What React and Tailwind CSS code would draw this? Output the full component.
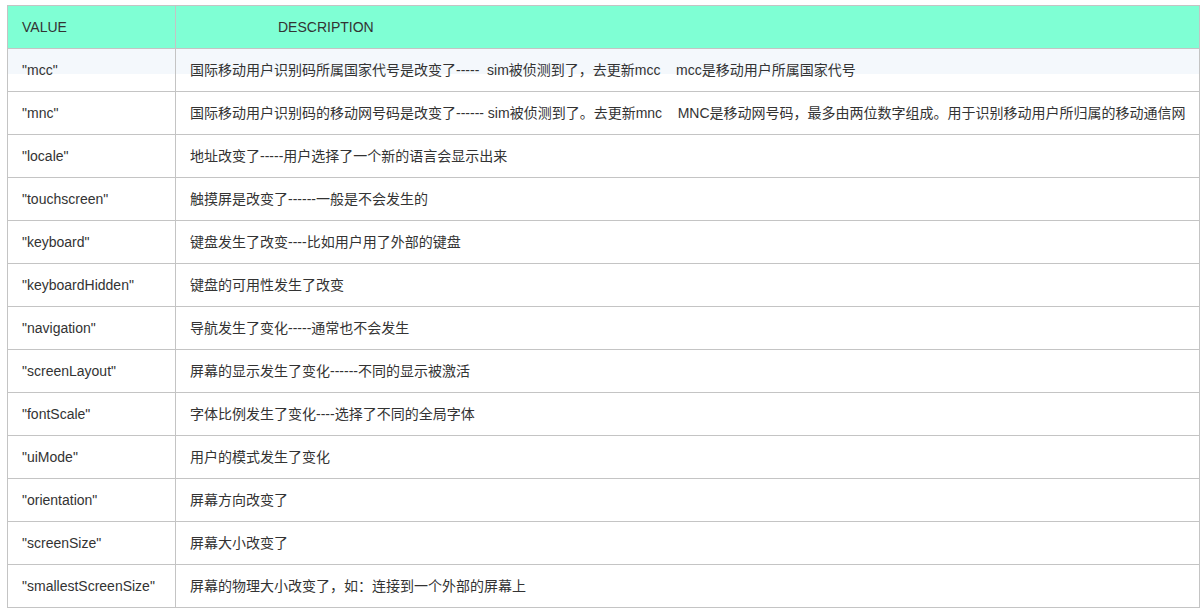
import React from "react"

const rows = [
  ["\"mcc\"", "国际移动用户识别码所属国家代号是改变了-----\u00a0\u00a0sim被侦测到了，去更新mcc\u00a0\u00a0\u00a0\u00a0mcc是移动用户所属国家代号"],
  ["\"mnc\"", "国际移动用户识别码的移动网号码是改变了------ sim被侦测到了。去更新mnc\u00a0\u00a0\u00a0\u00a0MNC是移动网号码，最多由两位数字组成。用于识别移动用户所归属的移动通信网"],
  ["\"locale\"", "地址改变了-----用户选择了一个新的语言会显示出来"],
  ["\"touchscreen\"", "触摸屏是改变了------一般是不会发生的"],
  ["\"keyboard\"", "键盘发生了改变----比如用户用了外部的键盘"],
  ["\"keyboardHidden\"", "键盘的可用性发生了改变"],
  ["\"navigation\"", "导航发生了变化-----通常也不会发生"],
  ["\"screenLayout\"", "屏幕的显示发生了变化------不同的显示被激活"],
  ["\"fontScale\"", "字体比例发生了变化----选择了不同的全局字体"],
  ["\"uiMode\"", "用户的模式发生了变化"],
  ["\"orientation\"", "屏幕方向改变了"],
  ["\"screenSize\"", "屏幕大小改变了"],
  ["\"smallestScreenSize\"", "屏幕的物理大小改变了，如：连接到一个外部的屏幕上"],
]

export default function App() {
  return (
    <div className="min-h-[611px] bg-white pt-[5px] pl-[7px] font-['Liberation_Sans','Noto_Sans_CJK_SC',sans-serif] text-[14px] text-[#333]">
      <table className="w-[1193px] table-fixed border-collapse">
        <thead>
          <tr className="h-[43px] bg-[#7fffd4]">
            <th className="w-[168px] border border-[#c4c4c4] pl-[14px] text-left font-normal">VALUE</th>
            <th className="border border-[#c4c4c4] pl-[102px] text-left font-normal">DESCRIPTION</th>
          </tr>
        </thead>
        <tbody>
          {rows.map(([value, desc], i) => (
            <tr
              key={value}
              className={
                i === 0
                  ? "h-[43px] bg-[linear-gradient(to_bottom,#f4f8fc_25px,#ffffff_25px)]"
                  : "h-[43px]"
              }
            >
              <td className="border border-[#c4c4c4] pl-[14px] whitespace-nowrap">{value}</td>
              <td className="border border-[#c4c4c4] pl-[14px] whitespace-nowrap">{desc}</td>
            </tr>
          ))}
        </tbody>
      </table>
    </div>
  )
}
